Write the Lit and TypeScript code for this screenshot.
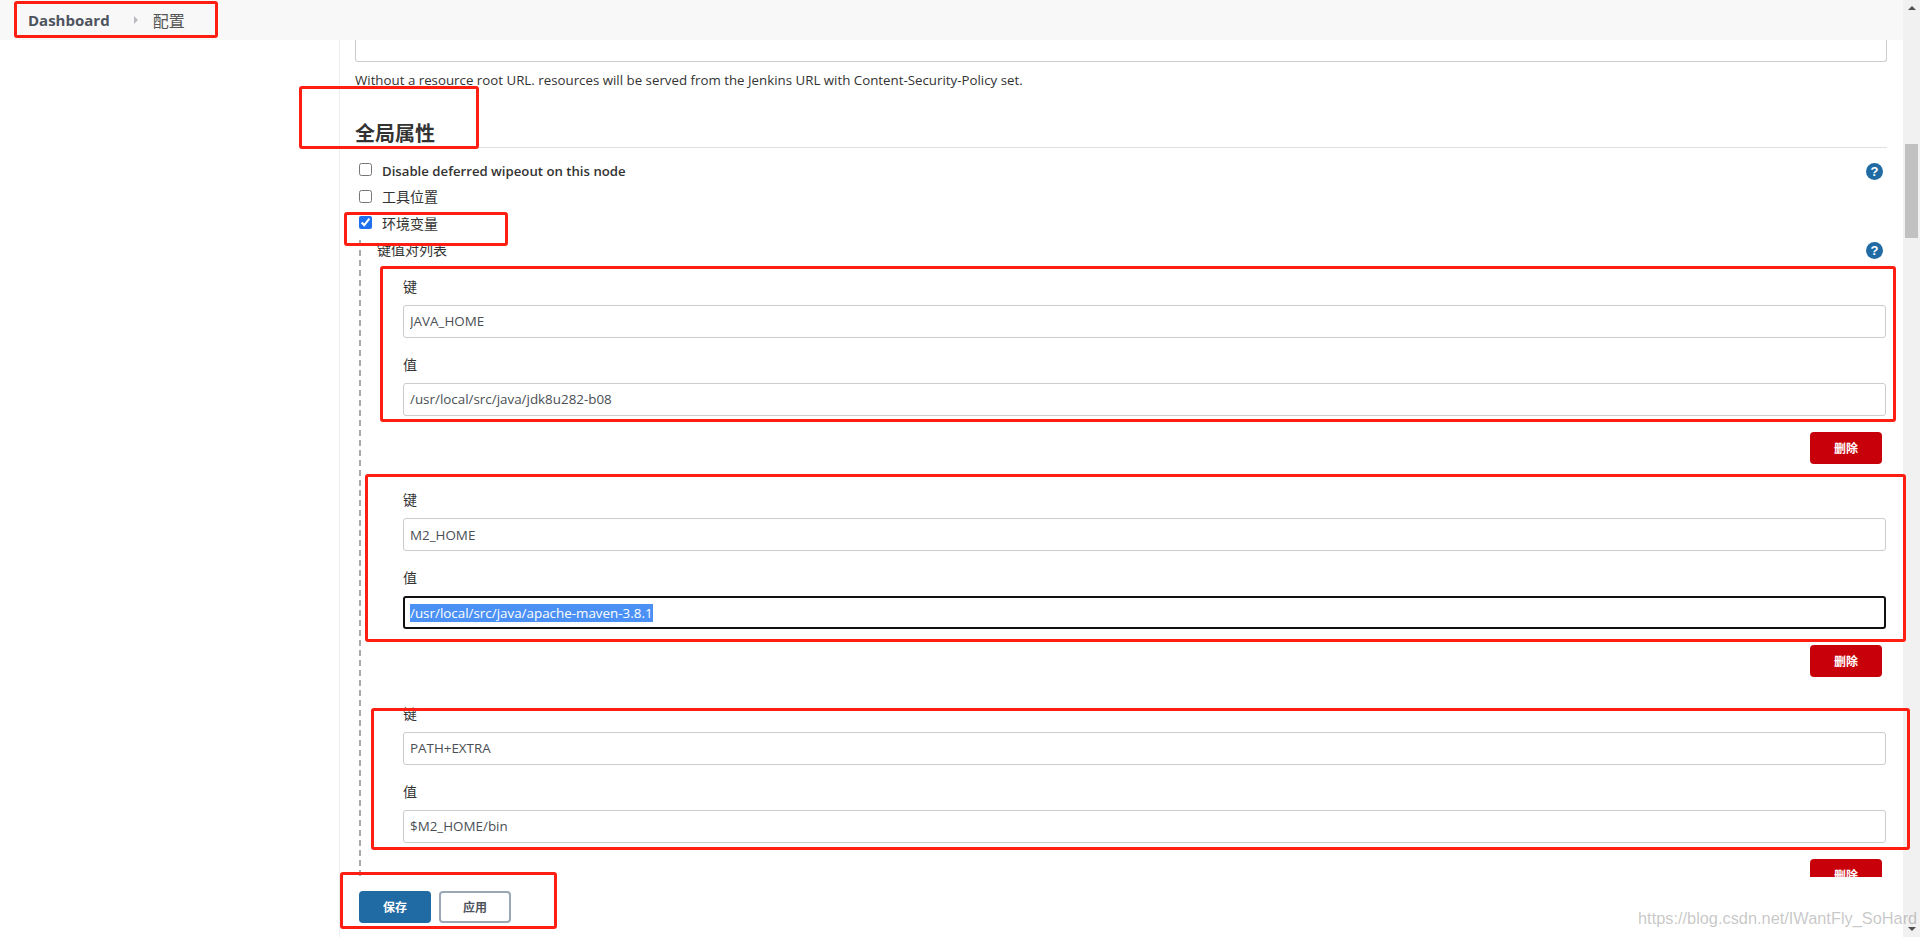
import { LitElement, html, css } from "lit";
import { customElement } from "lit/decorators.js";

const groups = [
  { k: "JAVA_HOME", v: "/usr/local/src/java/jdk8u282-b08", focus: false },
  { k: "M2_HOME", v: "/usr/local/src/java/apache-maven-3.8.1", focus: true },
  { k: "PATH+EXTRA", v: "$M2_HOME/bin", focus: false },
];

const marks = [
  [14, 1, 204, 37],
  [299, 86, 180, 63],
  [344, 212, 164, 34],
  [380, 266, 1516, 156],
  [365, 474, 1541, 168],
  [371, 708, 1539, 142],
  [340, 872, 217, 57],
];

const help = html`<span class="help">?</span>`;

@customElement("app-root")
export class AppRoot extends LitElement {
  static styles = css`
    :host {
      display: block;
      position: relative;
      width: 1920px;
      height: 937px;
      overflow: hidden;
      background: #fff;
      color: #333;
      font-family: "Open Sans", "Noto Sans CJK SC", sans-serif;
      font-size: 14px;
    }
    .frame { display: flex; height: 937px; }
    .page { flex: 1; min-width: 0; display: flex; flex-direction: column; }
    .crumbs {
      flex: 0 0 40px;
      background: #f8f8f8;
      display: flex;
      align-items: center;
      padding-left: 28px;
    }
    .crumbs b { font-size: 15px; font-weight: 700; color: #4d545d; }
    .crumbs i {
      width: 0; height: 0; margin: 0 15px 0 24px;
      border-left: 4px solid #b8bcc0;
      border-top: 4px solid transparent;
      border-bottom: 4px solid transparent;
    }
    .crumbs span { font-size: 16px; color: #555; }
    .body { flex: 1; min-height: 0; display: flex; }
    .side { flex: 0 0 339px; border-right: 1px solid #eee; }
    .main { flex: 1; min-width: 0; display: flex; flex-direction: column; padding: 0 16px 0 15px; }
    .scroll { flex: 1; min-height: 0; overflow: hidden; }
    .stub {
      height: 21px;
      border: 1px solid #ccc;
      border-top: 0;
      border-radius: 0 0 3px 3px;
    }
    .hint { margin-top: 8px; line-height: 20px; color: #333; font-size: 13.3px; }
    h2 {
      margin: 29px 0 0;
      font-size: 20px;
      line-height: 30px;
      font-weight: 700;
      border-bottom: 1px solid #e0e0e0;
      height: 28px;
      color: #333;
    }
    .row {
      display: flex;
      align-items: center;
      height: 26.5px;
      padding: 0 4px;
    }
    .row.first { margin-top: 10px; }
    .row input { width: 13px; height: 13px; margin: 0 10px 3px 0; accent-color: #1f6fef; }
    .row label { flex: 1; padding-bottom: 3px; }
    .row label.strong { font-weight: 600; font-size: 13.2px; padding-bottom: 0; }
    .help {
      flex: none;
      width: 17px; height: 17px;
      border-radius: 50%;
      background: #206ba4;
      color: #fff;
      font: 700 13px/17px "Liberation Sans", sans-serif;
      text-align: center;
    }
    .env {
      margin: 2px 0 0 4px;
      padding-left: 18px;
      background: repeating-linear-gradient(#aaa 0 6px, transparent 6px 10px) left top / 2px 100% no-repeat;
    }
    .list-head { display: flex; align-items: center; justify-content: space-between; height: 22px; padding-right: 4px; }
    .list-head span:first-child { position: relative; top: -2px; }
    .groups { padding-top: 15px; }
    .group { padding-left: 26px; }
    .group + .group { margin-top: 26.5px; }
    .lbl { line-height: 20px; margin-bottom: 8px; }
    .val { margin-top: 17px; }
    .group input {
      display: block;
      box-sizing: border-box;
      width: 1483px;
      height: 33px;
      padding: 0 6px;
      border: 1px solid #ccc;
      border-radius: 3px;
      background: #fff;
      color: #4a4f55;
      font: inherit;
      font-size: 13.4px;
      outline: none;
    }
    .group input.focus { border: 2px solid #111; padding: 0 5px; }
    .group input::selection { background: #4a90f5; color: #fff; }
    .del-row { display: flex; justify-content: flex-end; margin-top: 16px; padding-right: 5px; }
    button {
      box-sizing: border-box;
      width: 72px;
      height: 32px;
      border-radius: 4px;
      font: 700 12px "Open Sans", "Noto Sans CJK SC", sans-serif;
      padding: 0;
    }
    .del { background: #c80009; border: 0; color: #fff; }
    .bar { flex: 0 0 60px; display: flex; gap: 8px; padding: 14px 0 0 4px; box-sizing: border-box; }
    .save { background: #206ba4; border: 0; color: #fff; }
    .apply { background: #fff; border: 2px solid #9aa7b4; color: #4d545d; }
    .track { flex: 0 0 17px; background: #f1f1f1; position: relative; display: flex; flex-direction: column; align-items: center; justify-content: space-between; padding: 6px 0; box-sizing: border-box; }
    .track i { width: 0; height: 0; border-left: 4px solid transparent; border-right: 4px solid transparent; }
    .track i.up { border-bottom: 4px solid #505050; }
    .track i.down { border-top: 4px solid #505050; }
    .thumb { position: absolute; left: 2px; top: 144px; width: 13px; height: 94px; background: #c1c1c1; }
    .mark {
      position: absolute;
      box-sizing: border-box;
      border: 3px solid #ff1e12;
      border-radius: 3px;
      pointer-events: none;
    }
    .wm {
      position: absolute;
      left: 1638px;
      top: 907px;
      font: 16.35px/22px "Liberation Sans", sans-serif;
      color: rgba(120, 120, 120, 0.42);
      white-space: nowrap;
    }
  `;

  firstUpdated() {
    const el = this.renderRoot.querySelector<HTMLInputElement>("input.focus");
    if (el) {
      el.focus();
      el.select();
    }
  }

  render() {
    return html`
      <div class="frame">
        <div class="page">
          <nav class="crumbs"><b>Dashboard</b><i></i><span>配置</span></nav>
          <div class="body">
            <aside class="side"></aside>
            <main class="main">
              <div class="scroll">
                <div class="stub"></div>
                <div class="hint">Without a resource root URL. resources will be served from the Jenkins URL with Content-Security-Policy set.</div>
                <h2>全局属性</h2>
                <div class="row first"><input type="checkbox" /><label class="strong">Disable deferred wipeout on this node</label>${help}</div>
                <div class="row"><input type="checkbox" /><label>工具位置</label></div>
                <div class="row"><input type="checkbox" checked /><label>环境变量</label></div>
                <div class="env">
                  <div class="list-head"><span>键值对列表</span>${help}</div>
                  <div class="groups">
                    ${groups.map(
                      (g) => html`<div class="group">
                        <div class="lbl">键</div>
                        <input type="text" .value=${g.k} />
                        <div class="lbl val">值</div>
                        <input type="text" class=${g.focus ? "focus" : ""} .value=${g.v} />
                        <div class="del-row"><button class="del">删除</button></div>
                      </div>`
                    )}
                  </div>
                </div>
              </div>
              <div class="bar">
                <button class="save">保存</button>
                <button class="apply">应用</button>
              </div>
            </main>
          </div>
        </div>
        <div class="track"><i class="up"></i><div class="thumb"></div><i class="down"></i></div>
      </div>
      ${marks.map(
        ([l, t, w, h]) => html`<div class="mark" style="left:${l}px;top:${t}px;width:${w}px;height:${h}px"></div>`
      )}
      <div class="wm">https://blog.csdn.net/IWantFly_SoHard</div>
    `;
  }
}
